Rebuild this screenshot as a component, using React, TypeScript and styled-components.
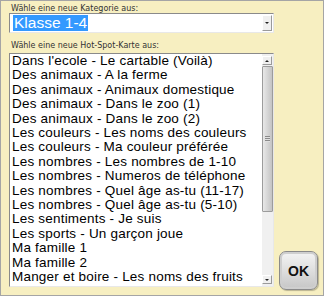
import React from "react";
import styled, { createGlobalStyle } from "styled-components";

const GlobalStyle = createGlobalStyle`
  html, body {
    margin: 0;
    padding: 0;
    background: #f7efc1;
  }
  * {
    box-sizing: border-box;
  }
`;

const Frame = styled.div`
  width: 324px;
  height: 296px;
  background: #f7efc1;
  border: 1px solid #a5a5a5;
  padding: 3px 0 0 8px;
  display: flex;
  flex-direction: column;
  overflow: hidden;
  font-family: "Liberation Sans", Arial, sans-serif;
`;

const Label = styled.div`
  font-family: "DejaVu Sans", Verdana, sans-serif;
  font-size: 8px;
  color: #333;
  padding-left: 2px;
  height: 9px;
  line-height: 9px;
`;

const SelectBox = styled.div`
  width: 265px;
  height: 20px;
  background: #fff;
  border: 1px solid;
  border-color: #8a8a8a #e8e8e8 #e8e8e8 #8a8a8a;
  display: flex;
  align-items: center;
  padding: 0 1px 0 3px;
`;

const Selected = styled.span`
  background: #3399ff;
  color: #fff;
  font-size: 15.5px;
  line-height: 16px;
  padding: 0 1px;
`;

const Spacer = styled.div`
  flex: 1;
`;

const ArrowButton = styled.div<{ $tall?: boolean }>`
  width: 10px;
  height: ${(p) => (p.$tall ? 9 : 16)}px;
  background: #f0f0f0;
  border: 1px solid;
  border-color: #fff #9a9a9a #9a9a9a #fff;
  display: flex;
  align-items: center;
  justify-content: center;
`;

const Tri = styled.div<{ $up?: boolean }>`
  width: 0;
  height: 0;
  border-left: 2px solid transparent;
  border-right: 2px solid transparent;
  ${(p) =>
    p.$up ? "border-bottom: 2px solid #222;" : "border-top: 2px solid #222;"}
`;

const SecondLabel = styled(Label)`
  margin-top: 8px;
`;

const Bottom = styled.div`
  display: flex;
  align-items: flex-end;
  margin-top: 3px;
`;

const ListBox = styled.div`
  width: 265px;
  height: 234px;
  margin-bottom: 3px;
  background: #fff;
  border: 1px solid;
  border-color: #8a8a8a #e8e8e8 #e8e8e8 #8a8a8a;
  display: flex;
  overflow: hidden;
`;

const Items = styled.div`
  flex: 1;
  padding: 0 0 0 2px;
  overflow: hidden;
`;

const Item = styled.div`
  font-size: 13.5px;
  letter-spacing: 0.2px;
  line-height: 14.4px;
  color: #000;
  white-space: nowrap;
`;

const ScrollBar = styled.div`
  width: 11px;
  background: #f0f0f0;
  display: flex;
  flex-direction: column;
  align-items: stretch;
  padding: 2px 0;
`;

const Track = styled.div`
  flex: 1;
  display: flex;
  flex-direction: column;
`;

const Thumb = styled.div`
  height: 146px;
  margin: 1px 0 0;
  border: 1px solid #9c9c9c;
  border-radius: 1px;
  background: linear-gradient(to right, #e8e8e8, #d2d2d2 60%, #c4c4c4);
  display: flex;
  align-items: center;
  justify-content: center;
`;

const Grip = styled.div`
  width: 5px;
  height: 6px;
  background: repeating-linear-gradient(
    to bottom,
    #8a8a8a 0 1px,
    #e0e0e0 1px 2px
  );
`;

const OkButton = styled.button`
  margin: 0 0 0 5px;
  width: 39px;
  height: 39px;
  border-radius: 7px;
  border: 1px solid #8a8a8a;
  background: linear-gradient(to bottom, #f4f4f4, #dcdcdc 55%, #c6c6c6);
  box-shadow: inset 0 0 0 2px #cfcfcf, 1px 1px 1px rgba(0, 0, 0, 0.25);
  font-family: "Liberation Sans", Arial, sans-serif;
  font-weight: bold;
  font-size: 14px;
  color: #111;
  padding: 0;
`;

const items = [
  "Dans l'ecole - Le cartable (Voilà)",
  "Des animaux - A la ferme",
  "Des animaux - Animaux domestique",
  "Des animaux - Dans le zoo (1)",
  "Des animaux - Dans le zoo (2)",
  "Les couleurs - Les noms des couleurs",
  "Les couleurs - Ma couleur préférée",
  "Les nombres - Les nombres de 1-10",
  "Les nombres - Numeros de téléphone",
  "Les nombres - Quel âge as-tu (11-17)",
  "Les nombres - Quel âge as-tu (5-10)",
  "Les sentiments - Je suis",
  "Les sports - Un garçon joue",
  "Ma famille 1",
  "Ma famille 2",
  "Manger et boire - Les noms des fruits",
];

export default function App() {
  return (
    <>
      <GlobalStyle />
      <Frame>
        <Label>Wähle eine neue Kategorie aus:</Label>
        <SelectBox>
          <Selected>Klasse 1-4</Selected>
          <Spacer />
          <ArrowButton>
            <Tri />
          </ArrowButton>
        </SelectBox>
        <SecondLabel>Wähle eine neue Hot-Spot-Karte aus:</SecondLabel>
        <Bottom>
          <ListBox>
            <Items>
              {items.map((t) => (
                <Item key={t}>{t}</Item>
              ))}
            </Items>
            <ScrollBar>
              <ArrowButton $tall>
                <Tri $up />
              </ArrowButton>
              <Track>
                <Thumb>
                  <Grip />
                </Thumb>
              </Track>
              <ArrowButton $tall>
                <Tri />
              </ArrowButton>
            </ScrollBar>
          </ListBox>
          <OkButton>OK</OkButton>
        </Bottom>
      </Frame>
    </>
  );
}
